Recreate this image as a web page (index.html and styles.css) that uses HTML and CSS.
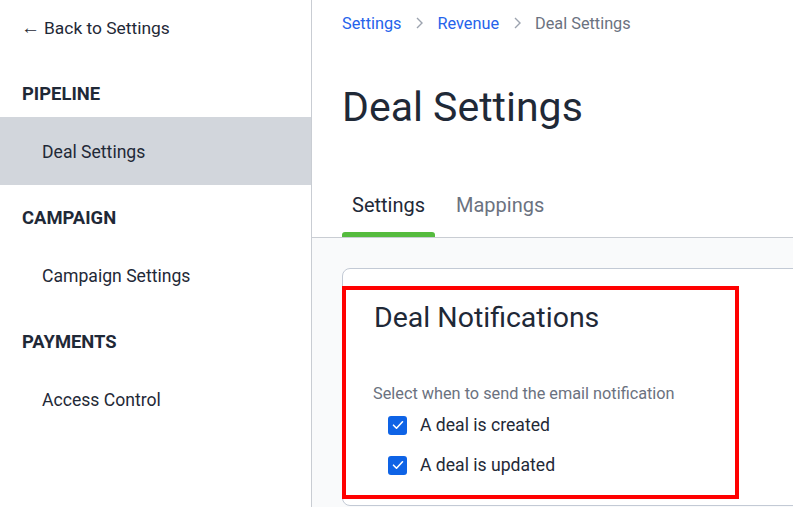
FILE: index.html
```html
<!DOCTYPE html>
<html lang="en">
<head>
  <meta charset="UTF-8">
  <meta name="viewport" content="width=device-width, initial-scale=1.0">
  <title>Deal Settings</title>
  <link rel="stylesheet" href="styles.css">
</head>
<body>
  <div class="layout">
    <aside class="sidebar">
      <a class="back-link" href="#"><span class="arrow">&larr;</span>Back to Settings</a>

      <div class="nav-heading">PIPELINE</div>
      <a class="nav-item active" href="#">Deal Settings</a>

      <div class="nav-heading">CAMPAIGN</div>
      <a class="nav-item" href="#">Campaign Settings</a>

      <div class="nav-heading">PAYMENTS</div>
      <a class="nav-item" href="#">Access Control</a>
    </aside>

    <main class="main">
      <div class="page-head">
        <nav class="breadcrumbs">
          <a href="#">Settings</a>
          <svg class="chevron" width="10" height="14" viewBox="0 0 10 14"><path d="M3 2l5 5-5 5" fill="none" stroke="#9ca3af" stroke-width="1.4"/></svg>
          <a href="#">Revenue</a>
          <svg class="chevron" width="10" height="14" viewBox="0 0 10 14"><path d="M3 2l5 5-5 5" fill="none" stroke="#9ca3af" stroke-width="1.4"/></svg>
          <span class="current">Deal Settings</span>
        </nav>

        <h1 class="page-title">Deal Settings</h1>

        <div class="tabs">
          <button class="tab active">Settings</button>
          <button class="tab">Mappings</button>
        </div>
      </div>

      <div class="content">
        <section class="card">
          <h2 class="card-title">Deal Notifications</h2>
          <p class="card-hint">Select when to send the email notification</p>

          <label class="check-row">
            <span class="check-box"><svg width="12" height="10" viewBox="0 0 12 10"><path d="M1.5 5.2l3 3 6-6.4" fill="none" stroke="#fff" stroke-width="1.6" stroke-linecap="round" stroke-linejoin="round"/></svg></span>
            A deal is created
          </label>
          <label class="check-row">
            <span class="check-box"><svg width="12" height="10" viewBox="0 0 12 10"><path d="M1.5 5.2l3 3 6-6.4" fill="none" stroke="#fff" stroke-width="1.6" stroke-linecap="round" stroke-linejoin="round"/></svg></span>
            A deal is updated
          </label>

          <!-- review highlight -->
          <div class="highlight"></div>
        </section>
      </div>
    </main>
  </div>
</body>
</html>
```

FILE: styles.css
```css
html, body {
  margin: 0;
  height: 100%;
  overflow: hidden;
}
body {
  font-family: Roboto, "Liberation Sans", sans-serif;
  color: #1f2937;
  background: #ffffff;
}
a {
  text-decoration: none;
  color: inherit;
}
.layout {
  display: flex;
  height: 100vh;
}

/* sidebar */
.sidebar {
  width: 311px;
  flex-shrink: 0;
  border-right: 1px solid #c9cdd3;
  display: flex;
  flex-direction: column;
}
.back-link {
  display: flex;
  align-items: center;
  padding: 16px 22px 21px 21px;
  font-size: 17.4px;
  line-height: 24px;
}
.back-link .arrow {
  font-size: 19px;
  margin-right: 4px;
}
.nav-heading {
  padding: 21px 22px 11px 22px;
  font-size: 18.4px;
  line-height: 24px;
  font-weight: 700;
}
.nav-item {
  display: flex;
  align-items: center;
  height: 68px;
  padding-left: 42px;
  padding-top: 2px;
  box-sizing: border-box;
  font-size: 17.6px;
}
.nav-item.active {
  background-color: #d2d6dc;
}

/* main */
.main {
  flex: 1;
  min-width: 0;
  display: flex;
  flex-direction: column;
  overflow: hidden;
}
.page-head {
  padding: 14px 0 0 30px;
  border-bottom: 1px solid #c9cdd3;
}
.breadcrumbs {
  display: flex;
  align-items: center;
  font-size: 16.3px;
  line-height: 20px;
}
.breadcrumbs a {
  color: #2563eb;
}
.breadcrumbs .chevron {
  margin: 0 13px 2px 13px;
}
.breadcrumbs .current {
  color: #6b7280;
}
.page-title {
  margin: 49px 0 0;
  font-size: 41px;
  line-height: 48px;
  font-weight: 400;
  color: #1f2937;
}
.tabs {
  display: flex;
  gap: 11px;
  margin-top: 60px;
}
.tab {
  position: relative;
  background: none;
  border: none;
  padding: 0 10px 18px;
  font-family: inherit;
  font-size: 20px;
  line-height: 28px;
  color: #6b7280;
  cursor: pointer;
}
.tab.active {
  color: #1f2937;
}
.tab.active::after {
  content: "";
  position: absolute;
  left: 0;
  right: 0;
  bottom: 0;
  height: 5px;
  border-radius: 3px 3px 0 0;
  background-color: #55bb3e;
}

.content {
  flex: 1;
  background-color: #f9fafb;
  padding: 30px 0 0 30px;
}
.card {
  position: relative;
  margin-right: -40px;
  background: #ffffff;
  border: 1px solid #c3cad5;
  border-radius: 8px;
  padding: 31px 31px 20px;
}
.card-title {
  margin: 0;
  font-size: 28.5px;
  line-height: 36px;
  font-weight: 400;
}
.card-hint {
  margin: 48px 0 1px -1px;
  font-size: 16.3px;
  line-height: 20px;
  color: #6b7280;
}
.check-row {
  display: flex;
  align-items: center;
  gap: 13px;
  height: 40px;
  padding-left: 14px;
  font-size: 17.6px;
}
.check-box {
  width: 19px;
  height: 19px;
  border-radius: 3px;
  background-color: #0e63e6;
  display: flex;
  align-items: center;
  justify-content: center;
}
.highlight {
  position: absolute;
  left: -1px;
  top: 17px;
  width: 397px;
  height: 213px;
  box-sizing: border-box;
  border: 4px solid #ff0000;
  pointer-events: none;
}
```
